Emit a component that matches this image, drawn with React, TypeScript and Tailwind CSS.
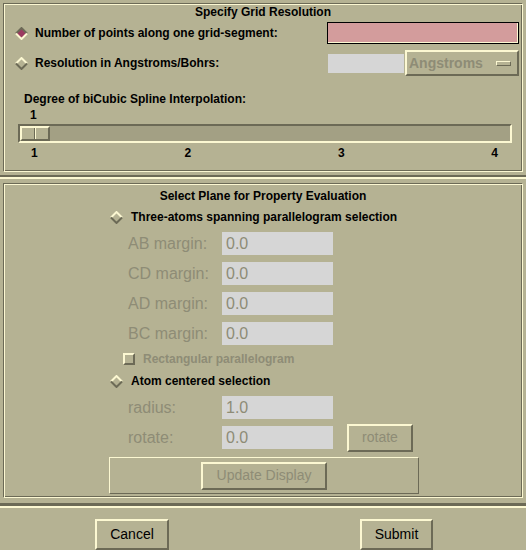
const LIGHT = "#fcf8d2";
const DARK = "#6c6a56";

const raised =
  "border-2 border-t-[#fcf8d2] border-l-[#fcf8d2] border-r-[#6c6a56] border-b-[#6c6a56]";
const sunken =
  "border-2 border-t-[#6c6a56] border-l-[#6c6a56] border-r-[#fcf8d2] border-b-[#fcf8d2]";
const etched =
  "border border-t-[#6c6a56] border-l-[#6c6a56] border-r-[#fcf8d2] border-b-[#fcf8d2] shadow-[inset_1px_1px_0_#fcf8d2,inset_-1px_-1px_0_#6c6a56]";

function Diamond({ on }: { on: boolean }) {
  const top = on ? DARK : LIGHT;
  const bottom = on ? LIGHT : DARK;
  return (
    <svg width="13" height="13" viewBox="0 0 13 13" className="shrink-0">
      <polygon points="6.5,1 12,6.5 6.5,12 1,6.5" fill={on ? "#9b3a60" : "none"} />
      <polyline points="1,6.5 6.5,1 12,6.5" stroke={top} strokeWidth="2" fill="none" />
      <polyline points="1,6.5 6.5,12 12,6.5" stroke={bottom} strokeWidth="2" fill="none" />
    </svg>
  );
}

function Field({ value }: { value: string }) {
  return (
    <div className="flex h-[23px] w-[111px] items-center bg-[#d6d6d6] pl-[4px] text-[16px] text-[#8e8c76]">
      {value}
    </div>
  );
}

function FieldRow({
  label,
  value,
  children,
}: {
  label: string;
  value: string;
  children?: React.ReactNode;
}) {
  return (
    <div className="flex h-[23px] items-center pl-[124px]">
      <span className="w-[94px] text-[16px] text-[#8e8c76]">{label}</span>
      <Field value={value} />
      {children}
    </div>
  );
}

export default function App() {
  return (
    <div className="h-[550px] w-[526px] overflow-hidden bg-[#b5b293] font-['Liberation_Sans',Arial,sans-serif] text-black">
      {/* Grid resolution */}
      <div className={`mx-[3px] mt-[3px] flex h-[169px] flex-col ${etched}`}>
        <div className="mt-[1px] text-center text-[12px] font-bold leading-[14px]">
          Specify Grid Resolution
        </div>
        <div className="mt-[3px] flex h-[22px] items-center pl-[11px] pr-[3px]">
          <Diamond on />
          <span className="ml-[7px] text-[12px] font-bold">
            Number of points along one grid-segment:
          </span>
          <div className="ml-auto h-[22px] w-[192px] border border-black bg-[#d39c9c] shadow-[inset_-1px_-1px_0_#fcf8d2]" />
        </div>
        <div className="mt-[6px] flex h-[26px] items-center pl-[11px] pr-[3px]">
          <Diamond on={false} />
          <span className="ml-[7px] text-[12px] font-bold">
            Resolution in Angstroms/Bohrs:
          </span>
          <div className="ml-auto h-[19px] w-[76px] bg-[#d6d6d6]" />
          <div
            className={`ml-[1px] flex h-[26px] w-[114px] items-center justify-between pl-[2px] pr-[6px] ${raised}`}
          >
            <span className="text-[14px] font-bold text-[#8e8c76]">Angstroms</span>
            <span className={`h-[5px] w-[15px] border border-t-[#fcf8d2] border-l-[#fcf8d2] border-r-[#6c6a56] border-b-[#6c6a56]`} />
          </div>
        </div>
        <div className="mt-[16px] pl-[20px] text-[12px] font-bold leading-[14px]">
          Degree of biCubic Spline Interpolation:
        </div>
        <div className="mt-[2px] pl-[26px] text-[12px] font-bold leading-[14px]">1</div>
        <div className={`ml-[14px] mt-[2px] h-[19px] w-[494px] bg-[#a3a084] ${sunken}`}>
          <div className={`flex h-full w-[30px] justify-center bg-[#b5b293] ${raised}`}>
            <div className="h-full w-[2px] border-l border-r border-l-[#6c6a56] border-r-[#fcf8d2]" />
          </div>
        </div>
        <div className="ml-[27px] mt-[3px] flex w-[467px] justify-between text-[12px] font-bold leading-[14px]">
          <span>1</span>
          <span>2</span>
          <span>3</span>
          <span>4</span>
        </div>
      </div>

      <div className="mt-[3px] h-[4px] border-t-2 border-b-2 border-t-[#6c6a56] border-b-[#fcf8d2]" />

      {/* Plane selection */}
      <div className={`mx-[3px] mt-[4px] flex h-[315px] flex-col ${etched}`}>
        <div className="mt-[5px] text-center text-[12px] font-bold leading-[14px]">
          Select Plane for Property Evaluation
        </div>
        <div className="mt-[7px] flex h-[14px] items-center pl-[106px]">
          <Diamond on={false} />
          <span className="ml-[8px] text-[12px] font-bold">
            Three-atoms spanning parallelogram selection
          </span>
        </div>
        <div className="mt-[8px] flex flex-col gap-[7px]">
          <FieldRow label="AB margin:" value="0.0" />
          <FieldRow label="CD margin:" value="0.0" />
          <FieldRow label="AD margin:" value="0.0" />
          <FieldRow label="BC margin:" value="0.0" />
        </div>
        <div className="mt-[7px] flex h-[14px] items-center pl-[119px]">
          <span className={`h-[12px] w-[12px] bg-[#b5b293] ${raised}`} />
          <span className="ml-[8px] text-[12px] font-bold text-[#8e8c76]">
            Rectangular parallelogram
          </span>
        </div>
        <div className="mt-[8px] flex h-[14px] items-center pl-[106px]">
          <Diamond on={false} />
          <span className="ml-[8px] text-[12px] font-bold">Atom centered selection</span>
        </div>
        <div className="mt-[8px] flex flex-col gap-[7px]">
          <FieldRow label="radius:" value="1.0" />
          <FieldRow label="rotate:" value="0.0">
            <div
              className={`ml-[14px] flex h-[28px] w-[66px] shrink-0 items-center justify-center text-[14px] text-[#8e8c76] ${raised}`}
            >
              rotate
            </div>
          </FieldRow>
        </div>
        <div className="ml-[105px] mt-[8px] flex h-[37px] w-[310px] items-center justify-center border border-t-[#fcf8d2] border-l-[#fcf8d2] border-r-[#6c6a56] border-b-[#6c6a56]">
          <div
            className={`flex h-[28px] w-[126px] items-center justify-center text-[14px] text-[#8e8c76] ${raised}`}
          >
            Update Display
          </div>
        </div>
      </div>

      <div className="mt-[5px] h-[5px] border-t-[3px] border-b-2 border-t-[#6c6a56] border-b-[#fcf8d2]" />

      {/* Actions */}
      <div className="mt-[11px] flex">
        <div
          className={`ml-[95px] flex h-[31px] w-[74px] items-center justify-center text-[14px] ${raised}`}
        >
          Cancel
        </div>
        <div
          className={`ml-[191px] flex h-[31px] w-[73px] items-center justify-center text-[14px] ${raised}`}
        >
          Submit
        </div>
      </div>
    </div>
  );
}
